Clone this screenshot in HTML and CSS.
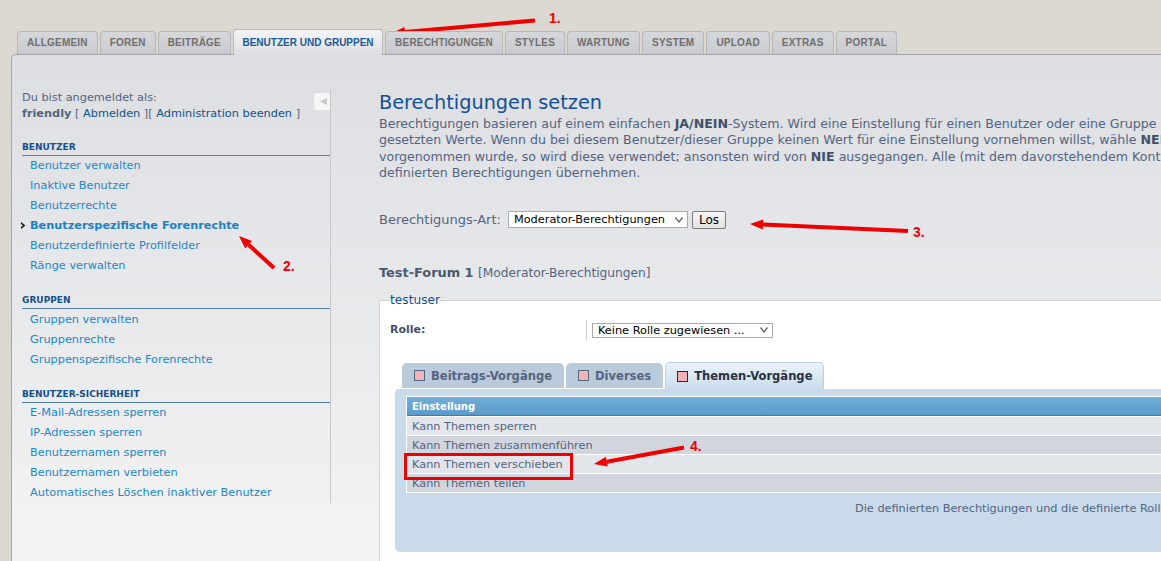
FILE: index.html
```html
<!DOCTYPE html>
<html lang="de">
<head>
<meta charset="utf-8">
<title>Administrations-Bereich</title>
<link rel="stylesheet" href="styles.css">
</head>
<body>
<div class="page">
  <nav class="tabs">
    <span class="tab">ALLGEMEIN</span>
    <span class="tab">FOREN</span>
    <span class="tab">BEITRÄGE</span>
    <span class="tab active">BENUTZER UND GRUPPEN</span>
    <span class="tab">BERECHTIGUNGEN</span>
    <span class="tab">STYLES</span>
    <span class="tab">WARTUNG</span>
    <span class="tab">SYSTEM</span>
    <span class="tab">UPLOAD</span>
    <span class="tab">EXTRAS</span>
    <span class="tab">PORTAL</span>
  </nav>
  <div class="panel">
    <aside class="sidebar">
      <div class="side-inner">
        <div class="login">
          <div class="login-text">Du bist angemeldet als:<br><b>friendly</b> [ <a href="#">Abmelden</a> ][ <a href="#">Administration beenden</a> ]</div>
          <span class="collapse"><svg width="16" height="17" viewBox="0 0 16 17"><polygon points="6,8.5 13,5 13,12" fill="#c9c9c9"/></svg></span>
        </div>
        <h3 class="menu-head">BENUTZER</h3>
        <ul class="menu">
          <li><a href="#">Benutzer verwalten</a></li>
          <li><a href="#">Inaktive Benutzer</a></li>
          <li><a href="#">Benutzerrechte</a></li>
          <li class="current"><span class="bullet"><svg width="5" height="7" viewBox="0 0 5 7"><polygon points="0,0 4.5,3.5 0,7 0,5 2,3.5 0,2" fill="#1a1a1a"/></svg></span><a href="#">Benutzerspezifische Forenrechte</a></li>
          <li><a href="#">Benutzerdefinierte Profilfelder</a></li>
          <li><a href="#">Ränge verwalten</a></li>
        </ul>
        <h3 class="menu-head">GRUPPEN</h3>
        <ul class="menu">
          <li><a href="#">Gruppen verwalten</a></li>
          <li><a href="#">Gruppenrechte</a></li>
          <li><a href="#">Gruppenspezifische Forenrechte</a></li>
        </ul>
        <h3 class="menu-head">BENUTZER-SICHERHEIT</h3>
        <ul class="menu">
          <li><a href="#">E-Mail-Adressen sperren</a></li>
          <li><a href="#">IP-Adressen sperren</a></li>
          <li><a href="#">Benutzernamen sperren</a></li>
          <li><a href="#">Benutzernamen verbieten</a></li>
          <li><a href="#">Automatisches Löschen inaktiver Benutzer</a></li>
        </ul>
      </div>
    </aside>
    <main class="main">
      <h1 class="title">Berechtigungen setzen</h1>
      <p class="intro">Berechtigungen basieren auf einem einfachen <b>JA/NEIN</b>-System. Wird eine Einstellung für einen Benutzer oder eine Gruppe auf <b>NIE</b> gesetzt, überschreibt dies alle anderen<br>gesetzten Werte. Wenn du bei diesem Benutzer/dieser Gruppe keinen Wert für eine Einstellung vornehmen willst, wähle <b>NEIN</b>. Wurde an anderer Stelle ein Wert für diese Einstellung<br>vorgenommen wurde, so wird diese verwendet; ansonsten wird von <b>NIE</b> ausgegangen. Alle (mit dem davorstehendem Kontrollkästchen) markierten Objekte werden die von dir<br>definierten Berechtigungen übernehmen.</p>
      <div class="type-row">
        <span class="type-label">Berechtigungs-Art:</span>
        <span class="select sel-type">Moderator-Berechtigungen<svg width="8" height="6" viewBox="0 0 8 6"><polyline points="0.5,0.5 4,5 7.5,0.5" fill="none" stroke="#666" stroke-width="1.3"/></svg></span>
        <span class="btn">Los</span>
      </div>
      <h2 class="forum">Test-Forum 1 <span class="forum-sub">[Moderator-Berechtigungen]</span></h2>
      <fieldset class="perm">
        <legend>testuser</legend>
        <div class="role-row">
          <div class="role-label">Rolle:</div>
          <div class="role-field"><span class="select sel-role">Keine Rolle zugewiesen ...<svg width="8" height="6" viewBox="0 0 8 6"><polyline points="0.5,0.5 4,5 7.5,0.5" fill="none" stroke="#666" stroke-width="1.3"/></svg></span></div>
        </div>
        <div class="perm-tabs">
          <span class="ptab"><i class="box"></i>Beitrags-Vorgänge</span>
          <span class="ptab"><i class="box"></i>Diverses</span>
          <span class="ptab active"><i class="box"></i>Themen-Vorgänge</span>
        </div>
        <div class="perm-panel">
          <table class="perm-table">
            <thead><tr><th>Einstellung</th></tr></thead>
            <tbody>
              <tr class="odd"><td>Kann Themen sperren</td></tr>
              <tr class="even"><td>Kann Themen zusammenführen</td></tr>
              <tr class="odd"><td>Kann Themen verschieben</td></tr>
              <tr class="even"><td>Kann Themen teilen</td></tr>
            </tbody>
          </table>
          <p class="note">Die definierten Berechtigungen und die definierte Rolle gelten nur für das ausgewählte Objekt und alle markierten Objekte.</p>
        </div>
      </fieldset>
    </main>
  </div>
</div>
<svg class="annot" width="1161" height="561" viewBox="0 0 1161 561">
  <g fill="#ee0000" stroke="none">
    <line x1="535" y1="20.5" x2="405" y2="31.9" stroke="#ee0000" stroke-width="4"/>
    <polygon points="392,33 404.5,26.9 405.4,36.8"/>
    <line x1="274" y1="268" x2="248.6" y2="244.8" stroke="#ee0000" stroke-width="4"/>
    <polygon points="239,236 252,241.1 245.2,248.5"/>
    <line x1="908" y1="231" x2="763" y2="224.6" stroke="#ee0000" stroke-width="4"/>
    <polygon points="750,224 763.2,219.6 762.8,229.6"/>
    <line x1="684" y1="447.5" x2="606.8" y2="461.7" stroke="#ee0000" stroke-width="4"/>
    <polygon points="594,464 605.9,456.7 607.7,466.6"/>
    <rect x="405.5" y="454.5" width="166" height="24" fill="none" stroke="#ee0000" stroke-width="3"/>
    <text x="549" y="23.3" class="num">1.</text>
    <text x="283" y="271" class="num">2.</text>
    <text x="913" y="237.3" class="num">3.</text>
    <text x="690" y="451" class="num">4.</text>
  </g>
</svg>
</body>
</html>
```
FILE: styles.css
```css
html, body {
  margin: 0;
  padding: 0;
  overflow: hidden;
}
body {
  position: relative;
  width: 1161px;
  height: 561px;
  background: #dbd8d1;
  font-family: "DejaVu Sans", Verdana, sans-serif;
  color: #536482;
}
a { text-decoration: none; }

.page {
  width: 1700px;
  padding-top: 29px;
}

/* top tabs */
.tabs {
  display: flex;
  align-items: flex-end;
  gap: 2px;
  height: 26px;
  padding-left: 17px;
  margin-bottom: -1px;
  position: relative;
  z-index: 2;
}
.tab {
  box-sizing: border-box;
  height: 23px;
  margin-bottom: 1px;
  padding: 0 9px;
  border: 1px solid #b6b7b9;
  border-bottom: 0;
  border-radius: 4px 4px 0 0;
  background: linear-gradient(#d6d7da, #c9cacd);
  font: bold 10px/22px "Liberation Sans", Arial, sans-serif;
  letter-spacing: 0.2px;
  color: #6f6f6f;
}
.tab.active {
  height: 26px;
  margin-bottom: 0;
  padding: 0 8.5px;
  letter-spacing: 0;
  background: linear-gradient(#f5f5f6, #dcdee2);
  color: #1b5a96;
  line-height: 25px;
}

/* panel */
.panel {
  display: flex;
  margin-left: 11px;
  min-height: 520px;
  border-top: 1px solid #a6a6a6;
  border-left: 1px solid #a6a6a6;
  border-top-left-radius: 5px;
  background: linear-gradient(#dcdee2 0, #e9eaec 280px, #f2f2f2 470px);
}

/* sidebar */
.sidebar {
  flex: none;
  width: 319px;
  box-sizing: border-box;
  padding: 34px 0 0 10px;
}
.side-inner {
  border-right: 1px solid #c8c8c8;
  font-size: 11.3px;
}
.login {
  display: flex;
  align-items: flex-start;
  line-height: 16px;
  padding-top: 1px;
}
.login-text { flex: 1; }
.login-text b { color: #536482; }
.login-text a { color: #105289; }
.collapse {
  flex: none;
  width: 16px;
  height: 17px;
  margin-top: 2.5px;
  background: #f6f6f6;
  border-radius: 3px 0 0 3px;
  display: flex;
}
.menu-head {
  margin: 18.6px 0 0;
  padding-bottom: 2px;
  border-bottom: 1px solid #4f7fae;
  font-size: 9px;
  line-height: 12px;
  font-weight: bold;
  color: #12508f;
}
.menu {
  list-style: none;
  margin: 0;
  padding: 0;
}
.menu li {
  display: flex;
  align-items: center;
  height: 20px;
  padding-left: 8px;
}
.menu a { color: #2387c9; }
.menu li.current a { font-weight: bold; color: #2080c2; }
.bullet {
  width: 9px;
  margin-left: -9px;
  display: flex;
}

/* main */
.main {
  flex: none;
  width: 1200px;
  padding: 36px 0 0 48px;
}
.title {
  margin: 0;
  font-size: 19.3px;
  line-height: 24px;
  font-weight: normal;
  color: #115098;
}
.intro {
  margin: 0.5px 0 0;
  font-size: 12.6px;
  line-height: 16.5px;
  white-space: nowrap;
}
.intro b { color: #425067; }

.type-row {
  display: flex;
  align-items: center;
  height: 19px;
  margin-top: 28.5px;
}
.type-label {
  font-size: 13px;
  margin-right: 7px;
}
.select {
  box-sizing: border-box;
  display: flex;
  align-items: center;
  justify-content: space-between;
  background: #fff;
  border: 1px solid #a5acb2;
  font-size: 11.3px;
  color: #000;
  padding: 0 4px 0 5px;
  white-space: nowrap;
}
.sel-type { width: 180px; height: 17px; }
.btn {
  box-sizing: border-box;
  width: 34px;
  height: 18px;
  margin-left: 4px;
  border: 1px solid #7a7a7a;
  border-radius: 2px;
  background: linear-gradient(#f6f6f6, #e2e2e2);
  color: #000;
  font-size: 12px;
  line-height: 16px;
  text-align: center;
}

.forum {
  margin: 35px 0 0;
  font-size: 12.9px;
  line-height: 18px;
  font-weight: bold;
  color: #4a5a70;
}
.forum-sub {
  font-weight: normal;
  font-size: 12.2px;
  color: #536482;
}

/* fieldset */
.perm {
  margin: 10px 0 0;
  padding: 12px 0 0 10px;
  min-height: 300px;
  border: 1px solid #d2d2d2;
  background: #fff;
}
.perm legend {
  padding: 0;
  font-size: 12.2px;
  line-height: 16px;
  color: #115098;
}
.role-row {
  display: flex;
  height: 20px;
}
.role-label {
  width: 196px;
  font-size: 11px;
  line-height: 20px;
  font-weight: bold;
  color: #425067;
}
.role-field {
  display: flex;
  align-items: center;
  padding-left: 5px;
  border-left: 1px solid #cccccc;
}
.sel-role { width: 181px; height: 15px; }

.perm-tabs {
  display: flex;
  align-items: flex-end;
  gap: 2px;
  height: 27px;
  margin: 22px 0 0 12px;
}
.ptab {
  box-sizing: border-box;
  display: flex;
  align-items: center;
  gap: 6px;
  height: 25px;
  margin-bottom: 1px;
  padding: 0 12px;
  border-radius: 5px 5px 0 0;
  background: #b9cadb;
  font-size: 11.55px;
  font-weight: bold;
  color: #536482;
}
.ptab.active {
  height: 27px;
  margin-bottom: 0;
  padding: 0 11px;
  border: 1px solid #b9cfe3;
  border-bottom: 0;
  background: linear-gradient(#e9f3fc, #cadceb);
  color: #2a3140;
}
.box {
  box-sizing: border-box;
  width: 11px;
  height: 11px;
  border: 1px solid #536482;
  background: #f1b3b5;
}
.ptab.active .box { border-color: #2a2a2a; }

.perm-panel {
  margin-left: 5px;
  padding: 7px 0 34.5px 11px;
  border-radius: 4px 0 0 5px;
  background: #c9dbea;
}
.perm-table {
  width: 900px;
  border-collapse: separate;
  border-spacing: 1px;
  background: #fff;
}
.perm-table th {
  height: 19px;
  padding: 0 0 0 5px;
  text-align: left;
  font-size: 10px;
  font-weight: bold;
  color: #fff;
  background: linear-gradient(#72b0da, #5a98c7);
  box-shadow: inset 0 -1px 0 #3f7aad;
}
.perm-table td {
  height: 18px;
  padding: 0 0 0 5px;
  font-size: 11.3px;
  color: #536482;
}
.perm-table tr.odd td { background: #e2e6eb; }
.perm-table tr.even td { background: #d1d6de; }
.note {
  margin: 8px 0 0;
  padding-left: 449px;
  font-size: 11.3px;
  line-height: 16px;
  white-space: nowrap;
}

/* annotations */
.annot {
  position: absolute;
  left: 0;
  top: 0;
  pointer-events: none;
}
.num {
  font: bold 14px "Liberation Sans", Arial, sans-serif;
}
```
